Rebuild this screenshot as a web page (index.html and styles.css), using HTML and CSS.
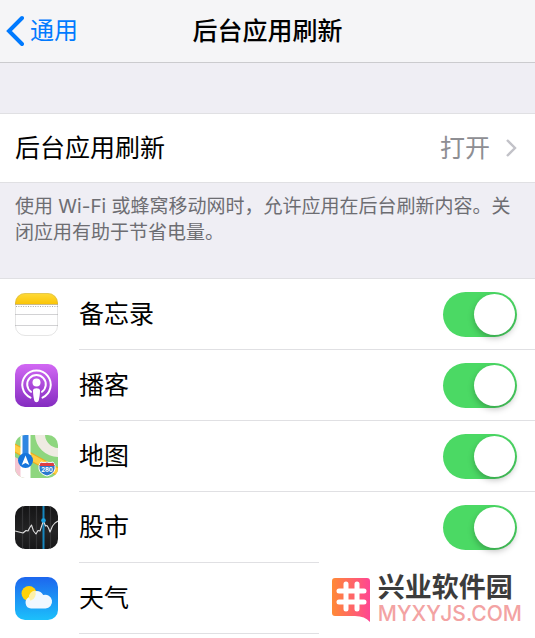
FILE: index.html
```html
<!DOCTYPE html>
<html lang="zh-CN">
<head>
    <meta charset="UTF-8">
    <meta name="viewport" content="width=device-width, initial-scale=1.0">
    <title>后台应用刷新</title>
    <link rel="stylesheet" href="styles.css">
</head>
<body>
    <header class="navbar">
        <a href="#" class="back">
            <svg class="back-icon" viewBox="0 0 18 32" aria-hidden="true">
                <path d="M16 3L3 16L16 29" fill="none" stroke="#007aff" stroke-width="4" stroke-linecap="round" stroke-linejoin="miter"/>
            </svg>
            <span>通用</span>
        </a>
        <h1>后台应用刷新</h1>
    </header>

    <main>
        <a href="#" class="setting">
            <span>后台应用刷新</span>
            <span class="setting-value">打开</span>
            <svg class="chevron" viewBox="0 0 12 20" aria-hidden="true">
                <path d="M2 2L10 10L2 18" fill="none" stroke="#c2c2c8" stroke-width="2.4"/>
            </svg>
        </a>
        <p class="note">使用 Wi-Fi 或蜂窝移动网时，允许应用在后台刷新内容。关闭应用有助于节省电量。</p>

        <ul class="app-list">
            <li class="app">
                <svg class="app-icon" viewBox="0 0 43 43" aria-hidden="true">
                    <defs>
                        <linearGradient id="notesTop" x1="0" y1="0" x2="0" y2="1">
                            <stop offset="0" stop-color="#ffdb3a"/>
                            <stop offset="1" stop-color="#fbc507"/>
                        </linearGradient>
                        <clipPath id="tile"><rect width="43" height="43" rx="10"/></clipPath>
                    </defs>
                    <g clip-path="url(#tile)">
                        <rect width="43" height="43" fill="#fff"/>
                        <rect width="43" height="11" fill="url(#notesTop)"/>
                        <path d="M0 11.5H43" stroke="#c9b98a" stroke-width="1"/>
                        <path d="M1 13.5H43" stroke="#aaa" stroke-width="1" stroke-dasharray="1 1.4"/>
                        <path d="M0 21.5H43M0 32.5H43" stroke="#d2d2d4" stroke-width="1"/>
                    </g>
                    <rect x=".5" y=".5" width="42" height="42" rx="9.5" fill="none" stroke="#999" stroke-opacity=".25"/>
                </svg>
                <label class="app-row" for="notes">
                    <span>备忘录</span>
                    <input type="checkbox" class="switch" id="notes" checked>
                </label>
            </li>
            <li class="app">
                <svg class="app-icon" viewBox="0 0 43 43" aria-hidden="true">
                    <defs>
                        <linearGradient id="podcasts" x1="0" y1="0" x2="0" y2="1">
                            <stop offset="0" stop-color="#d268f4"/>
                            <stop offset="1" stop-color="#842cc0"/>
                        </linearGradient>
                    </defs>
                    <rect width="43" height="43" rx="10" fill="url(#podcasts)"/>
                    <g fill="none" stroke="#fff" stroke-width="2" stroke-linecap="round">
                        <path d="M15.5 33.6A14.2 14.2 0 1 1 27.5 33.6"/>
                        <path d="M16 27.8A9.3 9.3 0 1 1 27 27.8"/>
                    </g>
                    <circle cx="21.5" cy="18.5" r="4" fill="#fff"/>
                    <path d="M18 26.5C18 23.5 25 23.5 25 26.5C25 30 24.4 33.5 23.8 36.2C23.4 38.8 19.6 38.8 19.2 36.2C18.6 33.5 18 30 18 26.5Z" fill="#fff"/>
                </svg>
                <label class="app-row" for="podcasts-switch">
                    <span>播客</span>
                    <input type="checkbox" class="switch" id="podcasts-switch" checked>
                </label>
            </li>
            <li class="app">
                <svg class="app-icon" viewBox="0 0 43 43" aria-hidden="true">
                    <g clip-path="url(#tile)">
                        <rect width="43" height="43" fill="#8ed67f"/>
                        <path d="M0 22L14 30V43H0Z" fill="#f5c6d2"/>
                        <path d="M20 0A23 23 0 0 0 43 22V13A14 14 0 0 1 30 0Z" fill="#efebe2"/>
                        <path d="M-2 12L45 38" stroke="#f0ad1c" stroke-width="8"/>
                        <path d="M-2 12L45 38" stroke="#ffcf45" stroke-width="6"/>
                        <path d="M10.5 0V43" stroke="#fff" stroke-width="10"/>
                        <path d="M10.5 0V25" stroke="#2f86e2" stroke-width="6"/>
                        <circle cx="10.5" cy="25.5" r="7.5" fill="#1675dc"/>
                        <path d="M10.5 20.5L14.3 30L10.5 28L6.7 30Z" fill="#fff"/>
                        <path d="M26 27Q29 28.5 32 27Q35 28.5 38 27Q41 30 40 34Q39 39 32 41Q25 39 24 34Q23 30 26 27Z" fill="#2b79ce" stroke="#fff" stroke-width="1"/>
                        <path d="M25.5 28H38.5L39.5 31H24.5Z" fill="#df3e42"/>
                        <text x="32" y="37" class="route-number">280</text>
                    </g>
                </svg>
                <label class="app-row" for="maps">
                    <span>地图</span>
                    <input type="checkbox" class="switch" id="maps" checked>
                </label>
            </li>
            <li class="app">
                <svg class="app-icon" viewBox="0 0 43 43" aria-hidden="true">
                    <defs>
                        <linearGradient id="stocks" x1="0" y1="0" x2="0" y2="1">
                            <stop offset="0" stop-color="#151516"/>
                            <stop offset=".6" stop-color="#242425"/>
                            <stop offset="1" stop-color="#171718"/>
                        </linearGradient>
                    </defs>
                    <g clip-path="url(#tile)">
                        <rect width="43" height="43" fill="url(#stocks)"/>
                        <path d="M7.5 0V43M14.5 0V43M21.5 0V43M35.5 0V43" stroke="#343436" stroke-width="1.2"/>
                        <path d="M28.5 0V43" stroke="#1686bd" stroke-width="2"/>
                        <path d="M0 25L4 26L8 27L11 24.5L13 25L14.5 22L16.5 19L18.5 25L21 28L23 24.5L25 25L27 19L28.5 15L30.5 20L32 19.5L33.5 22L35 26L37.5 20L40 17L43 15" fill="none" stroke="#ddd" stroke-width="1.1" stroke-linejoin="round"/>
                        <circle cx="28.5" cy="14.5" r="2.3" fill="#19a3e3"/>
                    </g>
                </svg>
                <label class="app-row" for="stocks-switch">
                    <span>股市</span>
                    <input type="checkbox" class="switch" id="stocks-switch" checked>
                </label>
            </li>
            <li class="app">
                <svg class="app-icon" viewBox="0 0 43 43" aria-hidden="true">
                    <defs>
                        <linearGradient id="weather" x1="0" y1="0" x2="0" y2="1">
                            <stop offset="0" stop-color="#1d66ee"/>
                            <stop offset="1" stop-color="#1cc0fb"/>
                        </linearGradient>
                    </defs>
                    <rect width="43" height="43" rx="10" fill="url(#weather)"/>
                    <circle cx="14" cy="16.5" r="7.5" fill="#ffd20a"/>
                    <path d="M16 31.5A6 6 0 0 1 13.8 20.2A7.8 7.8 0 0 1 28.2 18A6.9 6.9 0 1 1 30.5 31.5Z" fill="#f0f8ff"/>
                    <path d="M13.8 20.2A7.8 7.8 0 0 1 20 13.5A7.5 7.5 0 0 1 15.5 23.8L13.8 20.2Z" fill="#fdf0a8"/>
                </svg>
                <label class="app-row" for="weather-switch">
                    <span>天气</span>
                    <input type="checkbox" class="switch" id="weather-switch" checked>
                </label>
            </li>
        </ul>
    </main>

    <aside class="watermark">
        <svg class="watermark-logo" viewBox="0 0 38 44" aria-hidden="true">
            <defs>
                <linearGradient id="brand" x1="0" y1="0" x2="1" y2="0">
                    <stop offset="0" stop-color="#ff8a35"/>
                    <stop offset="1" stop-color="#ff4593"/>
                </linearGradient>
            </defs>
            <path d="M3 0H35Q38 0 38 3V44Q33 38 23 38H3Q0 38 0 35V3Q0 0 3 0Z" fill="url(#brand)"/>
            <path d="M14 6V31M25 6V31M7 13H32M7 24H32" stroke="#fff" stroke-width="5" stroke-linecap="round"/>
        </svg>
        <div class="watermark-text">
            <span class="watermark-name">兴业软件园</span>
            <span class="watermark-site">MYXYJS.COM</span>
        </div>
    </aside>
</body>
</html>
```
FILE: styles.css
```css
:root {
    --blue: #007aff;
    --green: #4bd964;
    --line: #e0e0e3;
    --gray-bg: #efeef4;
}
* {
    box-sizing: border-box;
}
body {
    margin: 0;
    min-height: 100vh;
    position: relative;
    overflow-x: hidden;
    background: #fff;
    color: #000;
    font-family: "Inter", "Noto Sans CJK SC", sans-serif;
    font-size: 25px;
    line-height: 36px;
}
a {
    color: inherit;
    text-decoration: none;
}
.navbar {
    display: grid;
    grid-template-columns: 1fr auto 1fr;
    align-items: center;
    height: 63px;
    padding: 0 6px;
    background: #f5f5f7;
    border-bottom: 1px solid #cbcbce;
}
.back {
    display: flex;
    align-items: center;
    gap: 6px;
    color: var(--blue);
    font-size: 24px;
}
.back-icon {
    width: 18px;
    height: 32px;
}
h1 {
    margin: 0;
    font-size: 25px;
    font-weight: 500;
}
main {
    padding-top: 50px;
    background: var(--gray-bg);
}
.setting {
    display: flex;
    align-items: center;
    height: 70px;
    padding: 0 18px 0 15px;
    background: #fff;
    border-top: 1px solid var(--line);
    border-bottom: 1px solid var(--line);
}
.setting-value {
    margin-left: auto;
    color: #8e8e93;
}
.chevron {
    width: 12px;
    height: 20px;
    margin-left: 15px;
}
.note {
    margin: 0;
    padding: 11px 15px 32px;
    color: #6d6d72;
    font-size: 19px;
    line-height: 26px;
}
.app-list {
    margin: 0;
    padding: 0;
    list-style: none;
    background: #fff;
    border-top: 1px solid var(--line);
}
.app {
    display: flex;
    align-items: center;
    gap: 21px;
    padding-left: 15px;
}
.app-icon {
    width: 43px;
    height: 43px;
    flex-shrink: 0;
}
.app-row {
    display: flex;
    flex: 1;
    align-items: center;
    justify-content: space-between;
    height: 71px;
    padding-right: 18px;
    border-bottom: 1px solid var(--line);
}
.switch {
    appearance: none;
    display: flex;
    width: 74px;
    height: 45px;
    margin: 0;
    padding: 2px;
    border-radius: 23px;
    background: #e5e5ea;
    cursor: pointer;
}
.switch::before {
    content: "";
    width: 41px;
    height: 41px;
    border-radius: 50%;
    background: #fff;
    box-shadow: 0 3px 6px rgba(0,0,0,0.25);
}
.switch:checked {
    justify-content: flex-end;
    background: var(--green);
}
.route-number {
    fill: #fff;
    font-size: 6px;
    font-weight: bold;
    text-anchor: middle;
}

/* site mark over the bottom right corner */
.watermark {
    position: absolute;
    right: 0;
    bottom: 0;
    display: flex;
    align-items: center;
    gap: 8px;
    height: 76px;
    padding: 0 13px;
    background: #fff;
}
.watermark-logo {
    width: 38px;
    height: 44px;
}
.watermark-text {
    display: flex;
    flex-direction: column;
}
.watermark-name {
    color: #3c3c3c;
    font-size: 27px;
    font-weight: 700;
    line-height: 28px;
}
.watermark-site {
    color: #f3a3a3;
    font-size: 21px;
    font-weight: 500;
    line-height: 24px;
}
```
